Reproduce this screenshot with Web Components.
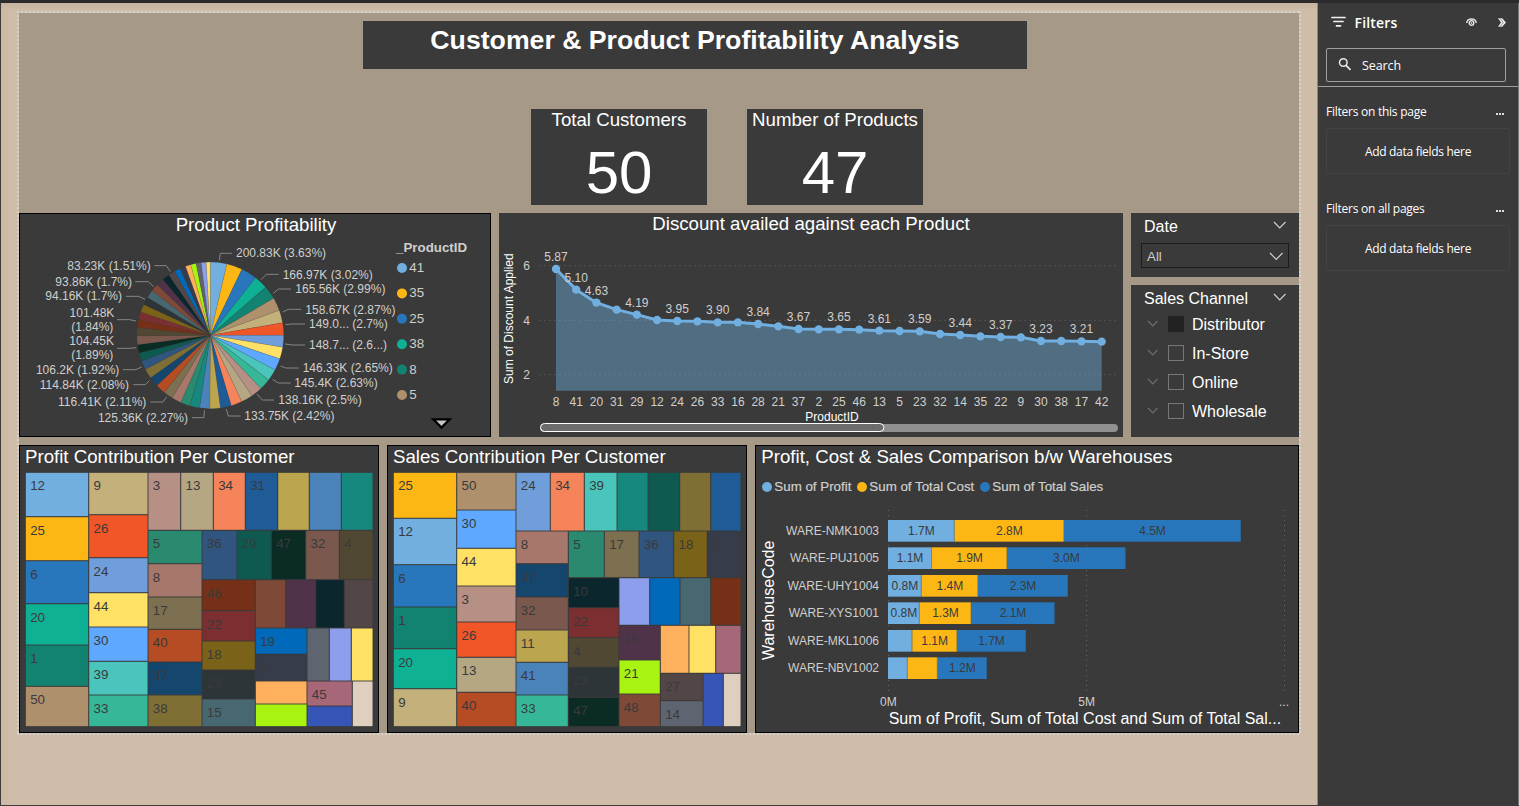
<!DOCTYPE html>
<html lang="en">
<head>
<meta charset="utf-8">
<title>Customer &amp; Product Profitability Analysis</title>
<style>
html,body{margin:0;height:100%;overflow:hidden;background:#2b2b2b;font-family:"Liberation Sans",Arial,sans-serif}
</style>
</head>
<body>
<app-frame>
  <report-page>
    <title-banner slot="title">Customer &amp; Product Profitability Analysis</title-banner>
    <kpi-card slot="kpi" value="50">Total Customers</kpi-card>
    <kpi-card slot="kpi" value="47">Number of Products</kpi-card>
    <pie-chart slot="mid"></pie-chart>
    <area-chart slot="mid"></area-chart>
    <slicer-stack slot="mid">
      <date-slicer></date-slicer>
      <channel-slicer></channel-slicer>
    </slicer-stack>
    <tree-map slot="low" kind="profit"></tree-map>
    <tree-map slot="low" kind="sales"></tree-map>
    <warehouse-chart slot="low"></warehouse-chart>
  </report-page>
  <filters-pane slot="side">
    <filter-well>Filters on this page</filter-well>
    <filter-well>Filters on all pages</filter-well>
  </filters-pane>
</app-frame>
<script>
const define = (name, html) => customElements.define(name, class extends HTMLElement {
  constructor() { super(); this.attachShadow({mode: 'open'}); }
  connectedCallback() { this.shadowRoot.innerHTML = typeof html === 'function' ? html(this) : html; }
});

/* Chart drawings use three units per CSS pixel. */
const chartCss = `:host{display:block;background:#3a3a3a;box-sizing:border-box}
svg{display:block;width:100%;height:100%}
text{font-family:"Liberation Sans",Arial,sans-serif;font-size:36px;fill:#d0cfcd}
.t{font-size:56px;fill:#fff}.m{text-anchor:middle}.e{text-anchor:end}.w{fill:#fff}.l{font-size:40px}.d{fill:#3a3a3a}`;

const P = ['#70AFE0','#FDB714','#2877BC','#0FB194','#118370','#AF906D','#C4B07B','#F15628','#709EDB','#FFE166','#5FA8FF','#4AC5BB','#36B797','#B68F85','#B5A684','#F5845B','#1F5C97','#BCA54F','#4A82BA','#17887D','#298A6F','#A6776A','#7C7050','#B54C24','#15466E','#7F6F35','#30557F','#0F5A50','#0B2C25','#7B584E','#504833','#773018','#7C2F31','#7A6218','#2E3539','#486871','#7E4A37','#503349','#0C262D','#534646','#0069B9','#373C4A','#FFB05C','#A9F312','#5F6570','#8D9FEC','#FFE164','#A66779','#3556B7','#DFCFBF'];

define('app-frame', `<style>
:host{display:grid;grid-template-columns:1317px 201px;width:1519px;height:806px;box-sizing:border-box;padding:3px 0 1px 1px;background:linear-gradient(#2b2b2b,#2b2b2b) 0 0/100% 3px no-repeat,#3a3a3a;background-color:#3c3c3c}
main{background:linear-gradient(#b9a58f66,#0000) 0 0/100% 7px no-repeat,linear-gradient(90deg,#c9b29955,#0000) 0 0/10px 100% no-repeat,#cfbda9;padding:8px 0 0 16px;border-right:1px solid #8b8783}
</style><main><slot></slot></main><slot name="side"></slot>`);

define('report-page', `<style>
:host{display:block;width:1284px;height:724px;box-sizing:border-box;padding:2px;background:
repeating-linear-gradient(90deg,#d3d3d3 0 2px,#cfbda900 2px 4px) 0 0/100% 2px no-repeat,
repeating-linear-gradient(90deg,#d3d3d3 0 2px,#cfbda900 2px 4px) 0 100%/100% 2px no-repeat,
repeating-linear-gradient(#d3d3d3 0 2px,#cfbda900 2px 4px) 0 0/2px 100% no-repeat,
repeating-linear-gradient(#d3d3d3 0 2px,#cfbda900 2px 4px) 100% 0/2px 100% no-repeat}
.page{display:grid;grid-template-rows:48px 40px 96px 8px 224px 8px 288px;width:1280px;height:720px;box-sizing:border-box;padding-top:8px;background:#a69988}
.title{display:flex;padding-left:344px}
.kpi{display:flex;gap:40px;padding-left:512px}
.title{grid-row:1}.kpi{grid-row:3}.mid{grid-row:5;display:grid;grid-template-columns:472px 624px 168px;gap:8px}
.low{grid-row:7;display:grid;grid-template-columns:360px 360px 544px;gap:8px}
</style><div class="page"><div class="title"><slot name="title"></slot></div><div class="kpi"><slot name="kpi"></slot></div><div class="mid"><slot name="mid"></slot></div><div class="low"><slot name="low"></slot></div></div>`);

define('title-banner', `<style>:host{display:block;width:664px;height:48px;background:#3a3a3a;color:#fff;font-weight:700;font-size:26.67px;line-height:39px;text-align:center;white-space:nowrap}</style><slot></slot>`);

define('kpi-card', el => `<style>:host{display:block;width:176px;height:96px;background:#3a3a3a;color:#fff;text-align:center}
h2{margin:0;font-weight:400;font-size:18.67px;line-height:21px;white-space:nowrap}
b{display:block;font-weight:400;font-size:60px;line-height:68px;padding-top:9px}</style><h2><slot></slot></h2><b>${el.getAttribute('value')}</b>`);

define('pie-chart', () => {
  const cx = 586, cy = 382, r = 220;
  const ends = [3.63,7.1,10.6,13.6,16.59,19.46,22.25,25,27.6,30.2,32.85,35.4,37.9,40.4,42.95,45.4,47.8,50.1,52.35,54.5,56.6,58.75,60.85,63,65.15,67.35,69.3,71.15,72.95,74.9,76.7,78.45,80.15,81.9,83.65,85.4,87.1,88.8,90.4,91.9,93.25,94.5,95.7,96.9,98,99.1,100];
  const pt = p => { const a = p / 50 * Math.PI; return (cx + r * Math.sin(a)).toFixed(1) + ' ' + (cy - r * Math.cos(a)).toFixed(1); };
  let prev = 0, s = '';
  ends.forEach((e, i) => { s += `<path d="M${cx} ${cy}L${pt(prev)}A${r} ${r} 0 0 1 ${pt(e)}Z" fill="${P[i]}" stroke="#3a3a3a" stroke-opacity=".3" stroke-width="1.2"/>`; prev = e; });
  const lines = ['613,157 616,136 651,136','738,215 754,199 791,199','775,256 790,243 828,243','803,312 820,304 858,304','811,350 830,348 870,348','810,408 833,411 870,411','797,474 812,480 851,480','773,514 790,525 827,525','726,558 742,576 777,576','634,603 640,624 677,624','568,607 567,629 531,629','455,566 444,582 406,582','403,518 391,530 355,530','380,477 362,485 324,485','363,419 345,421 306,421','363,339 344,335 306,335','390,274 371,265 333,265','416,236 400,221 361,221','466,191 454,173 418,173'];
  const right = [[663,147,'200.83K (3.63%)'],[803,213,'166.97K (3.02%)'],[841,255,'165.56K (2.99%)'],[871,318,'158.67K (2.87%)'],[882,360,'149.0... (2.7%)'],[882,423,'148.7... (2.6...)'],[863,492,'146.33K (2.65%)'],[838,537,'145.4K (2.63%)'],[790,588,'138.16K (2.5%)'],[688,636,'133.75K (2.42%)']];
  const left = [[407,186,'83.23K (1.51%)'],[351,234,'93.86K (1.7%)'],[321,276,'94.16K (1.7%)'],[298,327,'101.48K'],[295,369,'(1.84%)'],[297,411,'104.45K'],[295,453,'(1.89%)'],[313,497,'106.2K (1.92%)'],[342,542,'114.84K (2.08%)'],[394,594,'116.41K (2.11%)'],[519,642,'125.36K (2.27%)']];
  s += lines.map(l => `<polyline points="${l}" fill="none" stroke="#858585" stroke-width="3"/>`).join('');
  s += right.map(([x,y,t]) => `<text x="${x}" y="${y}">${t}</text>`).join('') + left.map(([x,y,t]) => `<text class="e" x="${x}" y="${y}">${t}</text>`).join('');
  s += [41,35,25,38,8,5].map((n,i) => `<circle cx="1161" cy="${180 + i*76.2}" r="15" fill="${P[i]}"/><text class="l" x="1183" y="${192 + i*76.2}">${n}</text>`).join('');
  return `<style>${chartCss}:host{box-shadow:inset 0 0 0 1px #000}</style><svg viewBox="12 15 1416 672"><text class="t m" x="723" y="68">Product Profitability</text>${s}<text class="l" font-weight="700" x="1143" y="132">_ProductID</text><path d="M1255 634H1304L1279.500 659Z" fill="#c8c8c8" stroke="#000" stroke-width="7"/></svg>`;
});

define('area-chart', () => {
  const ids = [8,41,20,31,29,12,24,26,33,16,28,21,37,2,25,46,13,5,23,32,14,35,22,9,30,38,17,42];
  const ys = [183,245,284,305,320,336,339,340,343,343,348,355,363,364,364,365,368,369,370,378,381,385,387,388,399,399,400,401];
  const lab = {0:'5.87',1:'5.10',2:'4.63',4:'4.19',6:'3.95',8:'3.90',10:'3.84',12:'3.67',14:'3.65',16:'3.61',18:'3.59',20:'3.44',22:'3.37',24:'3.23',26:'3.21'};
  const X = i => +(183 + i * 60.63).toFixed(1), pts = ys.map((y,i) => X(i) + ',' + y).join(' ');
  const grid = [173,337,500].map((y,i) => `<line x1="132" x2="1865" y1="${y}" y2="${y}" stroke="#4e4e4e" stroke-width="4" stroke-dasharray="6 9"/><text class="e" x="105" y="${y+13}">${6-2*i}</text>`).join('');
  return `<style>${chartCss}</style><svg viewBox="12 15 1872 672"><text class="t m" x="948" y="66">Discount availed against each Product</text>${grid}
<text class="w m" transform="translate(53 332) rotate(-90)">Sum of Discount Applied</text>
<polygon points="183,548 ${pts} 1820,548" fill="#70AFE0" fill-opacity=".44"/><polyline points="${pts}" fill="none" stroke="#70AFE0" stroke-width="9" stroke-linejoin="round"/>
${ys.map((y,i) => `<circle cx="${X(i)}" cy="${y}" r="12.500" fill="#70AFE0"/><text class="m" x="${X(i)}" y="595">${ids[i]}</text>`).join('')}
${Object.entries(lab).map(([i,t]) => `<text class="m" x="${X(+i)}" y="${ys[i]-24}">${t}</text>`).join('')}
<rect x="135" y="648" width="1734" height="24" rx="12" fill="#909090"/><rect x="136.500" y="646.500" width="1030" height="24" rx="12" fill="#6c6c6c" stroke="#fff" stroke-width="3"/>
<text class="w m" x="1001" y="638">_ProductID</text></svg>`;
});

define('slicer-stack', `<style>:host{display:grid;grid-template-rows:64px 152px;gap:8px}</style><slot></slot>`);

const chev = (w, h, c) => `<svg width="${w+2}" height="${h+2}" viewBox="-1 -1 ${w+2} ${h+2}" fill="none" stroke="${c}" stroke-width="1.2"><path d="M0 0L${w/2} ${h}L${w} 0"/></svg>`;
const slicerCss = `:host{display:block;background:#3a3a3a;color:#fff;font-size:16px;box-sizing:border-box}
header{display:flex;justify-content:space-between;align-items:center;height:27px;padding:0 12.5px 0 13px;white-space:nowrap}header svg{margin-top:-3px}`;

define('date-slicer', `<style>${slicerCss}
.box{display:flex;justify-content:space-between;align-items:center;margin:3px 10px 0;height:25px;box-sizing:border-box;border:1px solid #1c1c1c;padding:0 5px 0 5px;font-size:13.33px;color:#ccc}.box span{margin-top:1px}.box svg{margin-top:2px}
</style><header><span>Date</span>${chev(11.5,6,'#d0d0d0')}</header><div class="box"><span>All</span>${chev(12.5,6.5,'#d0d0d0')}</div>`);

define('channel-slicer', () => `<style>${slicerCss}
ul{list-style:none;margin:-2px 0 0;padding:0 0 0 15.500px}li{display:flex;align-items:center;height:29px;line-height:29px}
li svg{margin-top:-2px}i{width:16px;height:16px;box-sizing:border-box;border:1px solid #777;margin:-1px 8px 0 10px}
i.on{background:#222;border-color:#222}</style><header><span>Sales Channel</span>${chev(11.5,6,'#d0d0d0')}</header>
<ul>${['Distributor','In-Store','Online','Wholesale'].map((t,i) => `<li>${chev(9.5,5,'#6e6e6e')}<i class="${i?'':'on'}"></i><span>${t}</span></li>`).join('')}</ul>`);

/* Tiles: [left, top, right, bottom, fill, label]. */
const column = (x1, x2, ys, items) => items.map(([c,t],i) => [x1, ys[i], x2, ys[i+1], c, t]);
const row = (y1, y2, xs, items) => items.map(([c,t],i) => [xs[i], y1, xs[i+1], y2, c, t]);
const maps = {
  profit: ['Profit Contribution Per Customer', [
    ...column(31,221,[97,230,362,491,615,739,860],[[P[0],12],[P[1],25],[P[2],6],[P[3],20],[P[4],1],[P[5],50]]),
    ...column(221,399,[97,224,353,458,561,664,765,860],[[P[6],9],[P[7],26],[P[8],24],[P[9],44],[P[10],30],[P[11],39],[P[12],33]]),
    ...row(97,271,[399,497,595,691,788,883,979,1074],[[P[13],3],[P[14],13],[P[15],34],[P[16],31],[P[17]],[P[18]],[P[19]]]),
    ...column(399,561,[271,371,471,568,666,765,860],[[P[20],5],[P[21],8],[P[22],17],[P[23],40],[P[24],37],[P[25],38]]),
    ...row(271,419,[561,666,769,872,973,1074],[[P[26],36],[P[27],29],[P[28],47],[P[29],32],[P[30],4]]),
    ...column(561,721,[419,512,603,690,777,860],[[P[31],46],[P[32],22],[P[33],18],[P[34],23],[P[35],15]]),
    ...row(419,564,[721,812,902,988,1074],[[P[36]],[P[37]],[P[38]],[P[39]]]),
    ...column(721,876,[564,643,723,792,860],[[P[40],19],[P[41],2],[P[42]],[P[43]]]),
    ...row(564,723,[876,943,1009,1074],[[P[44]],[P[45]],[P[46]]]),
    ...column(876,1012,[723,798,860],[[P[47],45],[P[48]]]),
    [1012,723,1074,860,P[49]]
  ]],
  sales: ['Sales Contribution Per Customer', [
    ...column(31,221,[97,235,374,501,626,746,860],[[P[1],25],[P[0],12],[P[2],6],[P[4],1],[P[3],20],[P[6],9]]),
    ...column(221,399,[97,210,325,438,546,652,757,860],[[P[5],50],[P[10],30],[P[9],44],[P[13],3],[P[7],26],[P[14],13],[P[23],40]]),
    ...row(97,273,[399,502,604,702,795,890,983,1074],[[P[8],24],[P[15],34],[P[11],39],[P[19]],[P[27]],[P[25]],[P[16]]]),
    ...column(399,556,[273,371,471,570,667,765,860],[[P[21],8],[P[24],37],[P[29],32],[P[17],11],[P[18],41],[P[12],33]]),
    ...row(273,413,[556,664,768,872,973,1074],[[P[20],5],[P[22],17],[P[26],36],[P[33],18],[P[41],2]]),
    ...column(556,708,[413,503,593,682,772,860],[[P[38],10],[P[32],22],[P[30],4],[P[34],23],[P[28],47]]),
    ...row(413,556,[708,800,891,983,1074],[[P[45]],[P[40]],[P[35]],[P[31]]]),
    ...column(708,832,[556,660,762,860],[[P[37],16],[P[43],21],[P[36],48]]),
    ...row(556,700,[832,918,998,1074],[[P[42]],[P[46]],[P[47]]]),
    ...column(832,960,[700,782,860],[[P[39],27],[P[44],14]]),
    [960,700,1021,860,P[48]],[1021,700,1074,860,P[49]]
  ]]
};
define('tree-map', el => {
  const [title, tiles] = maps[el.getAttribute('kind')];
  return `<style>${chartCss}:host{box-shadow:inset 0 0 0 1px #000}.n{font-size:40px}</style><svg viewBox="12 15 1080 864"><text class="t" x="30" y="68">${title}</text>${tiles.map(([a,b,c,d,f,t]) =>
    `<rect x="${a+2}" y="${b+2}" width="${c-a-4}" height="${d-b-4}" fill="${f}" stroke="${f}" stroke-opacity=".5" stroke-width="2"/>${t ? `<text class="n d" x="${a+14.5}" y="${b+54}">${t}</text>` : ''}`).join('')}</svg>`;
});

define('warehouse-chart', () => {
  const rows = [['NMK1003',240,[614,942,1473],['1.7M','2.8M','4.5M']],['PUJ1005',322,[546,771,1127],['1.1M','1.9M','3.0M']],['UHY1004',405,[515,684,954],['0.8M','1.4M','2.3M']],['XYS1001',487,[509,664,914],['0.8M','1.3M','2.1M']],['MKL1006',570,[487,621,828],['','1.1M','1.7M']],['NBV1002',652,[473,563,711],['','','1.2M']]];
  const bars = rows.map(([n,y,xs,ls]) => `<text class="e" x="387" y="${y+45}">WARE-${n}</text>` + xs.map((x,i) => { const a = i ? xs[i-1] : 414; return `<rect x="${a}" y="${y}" width="${x-a}" height="65" fill="${P[i]}"/><path d="M${x-1.5} ${y}V${y+65}" stroke="#3a3a3a" stroke-opacity=".3" stroke-width="3"/>` + (ls[i] ? `<text class="m d" x="${(a+x)/2}" y="${y+45}">${ls[i]}</text>` : ''); }).join('')).join('');
  return `<style>${chartCss}:host{box-shadow:inset 0 0 0 1px #000}</style><svg viewBox="15 15 1632 864"><text class="t" x="34" y="68">Profit, Cost &amp; Sales Comparison b/w Warehouses</text>
${[[51,73,'Sum of Profit'],[336,358,'Sum of Total Cost'],[705,727,'Sum of Total Sales']].map(([c,x,t],i) => `<circle cx="${c}" cy="141" r="15" fill="${P[i]}"/><text class="l" x="${x}" y="153" stroke="#d0cfcd" stroke-width=".6">${t}</text>`).join('')}
${[415.5,1009.5,1603.5].map(x => `<line x1="${x}" x2="${x}" y1="210" y2="755" stroke="#676767" stroke-width="3" stroke-dasharray="3 12"/>`).join('')}
${bars}<text class="m" x="415" y="798">0M</text><text class="m" x="1010" y="798">5M</text><text class="m" x="1602" y="798">...</text>
<text class="w m" style="font-size:48px" transform="translate(71 481) rotate(-90)">WarehouseCode</text><text class="w" style="font-size:48px" x="416" y="852">Sum of Profit, Sum of Total Cost and Sum of Total Sal...</text></svg>`;
});

define('filters-pane', `<style>
:host{display:block;background:#3a3a3a;border-right:1px solid #777;box-sizing:border-box;color:#fff;font-family:"Open Sans","Noto Sans",sans-serif}
header{display:flex;align-items:center;height:38px;padding:0 12px 0 12.500px}
header b{font-size:14px;font-weight:600;margin-left:9px;flex:1;letter-spacing:.2px}
header svg+svg{margin-left:21px}
.search{display:flex;align-items:center;height:34px;box-sizing:border-box;margin:7px 12px 0 8px;border:1px solid #a0a0a0;border-radius:2px;font-size:12.500px;letter-spacing:-.1px;padding-left:11px;gap:10px}
.search svg{margin-top:-2px}
hr{border:0;border-top:1px solid #a0a0a0;margin:4px 0 0}
</style><header><svg width="15" height="12" viewBox="0 0 15 12" stroke="#f4f4f4" stroke-width="1.700" stroke-linecap="round"><path d="M1 1.500H14M3 5.500H12M5.500 9.800H9.500"/></svg><b>Filters</b>
<svg width="11" height="8" viewBox="0 0 11 8"><path d="M.7 5C1.500 -.4 9.500 -.4 10.300 5" fill="none" stroke="#dcdcdc" stroke-width="1.500"/><circle cx="5.500" cy="5" r="2.300" fill="none" stroke="#f0f0f0" stroke-width="1.300"/><circle cx="5.500" cy="5" r=".9" fill="#ccc"/></svg>
<svg width="8" height="9" viewBox="0 0 8 9" fill="#ededed"><path d="M0 .3H4.200L8 4.500L4.200 8.700H0L3 4.500Z"/><path d="M2 .3L5.200 4.500L2 8.700" fill="none" stroke="#3a3a3a" stroke-width=".5"/></svg></header>
<div class="search"><svg width="14" height="14" viewBox="0 0 14 14" fill="none" stroke="#e8e8e8" stroke-width="1.500"><circle cx="5.300" cy="5.500" r="3.800"/><path d="M8 8.300L12.500 12.800" stroke-width="1.700"/></svg><span>Search</span></div><hr><slot></slot>`);

define('filter-well', `<style>
:host{display:block;font-size:12px;letter-spacing:-.25px;padding:16px 8px 0 8px;height:97px;box-sizing:border-box}
.h{display:flex;justify-content:space-between;line-height:18px;padding-right:6px}
.h svg{margin-top:10px}
.box{display:flex;align-items:center;justify-content:center;height:46px;box-sizing:border-box;border:1px solid #434343;border-radius:2px;margin-top:7px;letter-spacing:-.3px}
</style><div class="h"><slot></slot><svg width="8" height="2" fill="#ddd"><path d="M0 0h2v2H0zM3 0h2v2H3zM6 0h2v2H6z"/></svg></div><div class="box">Add data fields here</div>`);
</script>
</body>
</html>
